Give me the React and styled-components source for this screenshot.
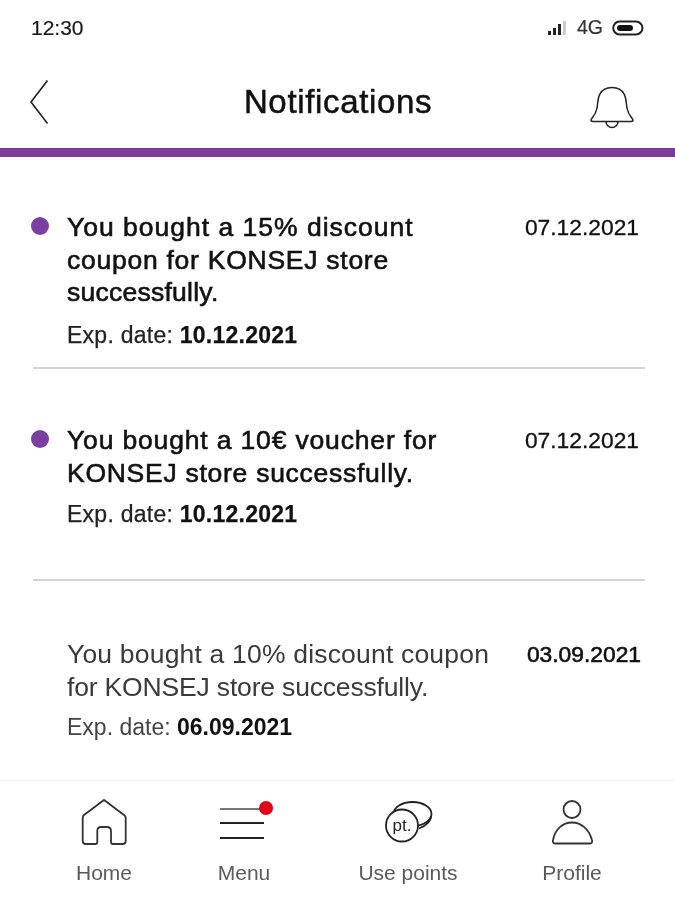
import React from "react";
import styled, { createGlobalStyle } from "styled-components";

const Global = createGlobalStyle`
  html, body { margin: 0; padding: 0; background: #fff; }
  body { font-family: "Liberation Sans", Arial, sans-serif; color: #111; }
`;
const Screen = styled.div`
  width: 675px; height: 900px; display: flex; flex-direction: column; overflow: hidden; background: #fff; filter: blur(0.4px);
`;
const StatusBar = styled.div`
  height: 55px; padding: 0 31px; display: flex; align-items: center; justify-content: space-between; box-sizing: border-box; flex: none;
`;
const Time = styled.span`font-size: 21px; color: #1a1a1a; -webkit-text-stroke: 0.2px #1a1a1a;`;
const StatusIcons = styled.div`display: flex; align-items: center; gap: 9px; font-size: 19.5px; color: #333; -webkit-text-stroke: 0.2px #333;`;
const Header = styled.header`
  height: 93px; flex: none; display: flex; align-items: center; justify-content: space-between; padding: 0 40px 0 29px; box-sizing: border-box;
`;
const BellIcon = styled.svg`margin-top: 12px;`;
const Title = styled.h1`
  margin: 0 0 0 36px; font-size: 33px; font-weight: 400; letter-spacing: 0.65px; color: #111; -webkit-text-stroke: 0.5px #111;
`;
const Bar = styled.div`height: 9px; background: #7a3c96; flex: none;`;
const List = styled.main`flex: 1; padding: 0 30px 0 33px; min-height: 0;`;
const Item = styled.article`
  display: grid; grid-template-columns: 34px 1fr auto; align-items: start; box-sizing: border-box;
  height: ${p => p.$h}px; padding-top: ${p => p.$top}px;
  border-bottom: ${p => (p.$last ? "0" : "2px solid #d4d4d4")};
`;
const Dot = styled.span`width: 18px; height: 18px; border-radius: 50%; background: #7a3fa0; margin: 6px 0 0 -2px;`;
const Body = styled.div`display: flex; flex-direction: column; align-items: flex-start;`;
const Message = styled.p`
  margin: 0; font-size: 26.5px; line-height: 32.5px; white-space: nowrap; color: ${p => (p.$read ? "#3a3a3a" : "#111")};
  ${p => (p.$read ? "" : "-webkit-text-stroke: 0.6px #111;")}
`;
const Line = styled.span`display: block; letter-spacing: ${p => p.$track}px;`;
const Exp = styled.p`
  margin: ${p => p.$gap}px 0 0; font-size: 23px; line-height: 26px; letter-spacing: ${p => (p.$read ? 0 : 0.25)}px;
  color: ${p => (p.$read ? "#444" : "#222")}; ${p => (p.$read ? "" : "-webkit-text-stroke: 0.25px #222;")}
`;
const ExpDate = styled.b`color: #111;`;
const DateText = styled.span`
  font-size: 22.8px; line-height: 32.5px; color: #111; margin-right: ${p => (p.$bold ? 4 : 6)}px; -webkit-text-stroke: ${p => (p.$bold ? "0.6px" : "0.3px")} #111;
`;
const Nav = styled.nav`
  height: 120px; flex: none; border-top: 1px solid #f5f5f5; display: grid; grid-template-columns: 208px 72px 256px 72px; box-sizing: border-box;
`;
const NavItem = styled.div`
  display: flex; flex-direction: column; align-items: center; padding-top: 17px; color: #5a5a5a; font-size: 21px; white-space: nowrap;
`;
const NavIcon = styled.svg`width: 60px; height: 52px; display: block; margin-bottom: 11px; flex: none;`;

const data = [
  { h: 212, top: 54, gap: 13, date: "07.12.2021", exp: "10.12.2021", unread: true,
    lines: [["You bought a 15% discount", 1], ["coupon for KONSEJ store", 0.74], ["successfully.", 0.25]] },
  { h: 212, top: 55, gap: 12, date: "07.12.2021", exp: "10.12.2021", unread: true,
    lines: [["You bought a 10€ voucher for", 0.84], ["KONSEJ store successfully.", 0.73]] },
  { h: 160, top: 57, gap: 11, last: true, date: "03.09.2021", exp: "06.09.2021",
    lines: [["You bought a 10% discount coupon", 0.19], ["for KONSEJ store successfully.", -0.17]] },
];

export default function App() {
  return (
    <Screen>
      <Global />
      <StatusBar>
        <Time>12:30</Time>
        <StatusIcons>
          <svg width="21" height="16" viewBox="0 0 21 16"><g fill="#222"><rect x="1" y="11" width="3" height="4" /><rect x="6" y="8" width="3" height="7" /><rect x="11" y="4" width="3" height="11" /></g><rect x="16" y="1" width="3" height="14" fill="#ccc" /></svg>
          <span>4G</span>
          <svg width="32" height="16" viewBox="0 0 32 16"><path d="M7.500 1.500H24c3.500 0 6.500 3 6.500 6.500s-3 6.500-6.500 6.500H7.500C4 14.500 1.200 11.500 1.200 8S4 1.500 7.500 1.500Z" fill="none" stroke="#222" strokeWidth="2" /><rect x="5" y="5" width="16" height="6" rx="3" fill="#111" /></svg>
        </StatusIcons>
      </StatusBar>
      <Header>
        <svg width="22" height="46" viewBox="0 0 22 46"><path d="M18.500 1.500 2 23l16.500 21.500" fill="none" stroke="#222" strokeWidth="1.600" /></svg>
        <Title>Notifications</Title>
        <BellIcon width="46" height="44" viewBox="0 0 46 44"><path d="M2 34c0-1.500 5-5 6-12 1-5 .5-10 3-14C13 4 18 1.500 23 1.500S33 4 35 8c2.500 4 2 9 3 14 1 7 6 10.500 6 12 0 1-1 1.500-2 1.500H4C3 35.500 2 35 2 34Z" fill="none" stroke="#222" strokeWidth="1.500" /><path d="M17 35.500a6 6 0 0 0 12 0" fill="none" stroke="#222" strokeWidth="1.500" /></BellIcon>
      </Header>
      <Bar />
      <List>
        {data.map((d, i) => (
          <Item key={i} $h={d.h} $top={d.top} $last={d.last}>
            {d.unread ? <Dot /> : <span />}
            <Body>
              <Message $read={!d.unread}>
                {d.lines.map(([text, track]) => <Line key={text} $track={track}>{text}</Line>)}
              </Message>
              <Exp $gap={d.gap} $read={!d.unread}>Exp. date: <ExpDate>{d.exp}</ExpDate></Exp>
            </Body>
            <DateText $bold={!d.unread}>{d.date}</DateText>
          </Item>
        ))}
      </List>
      <Nav>
        <NavItem>
          <NavIcon viewBox="0 0 60 52"><path d="M30 2 10 17Q8.700 18 8.700 20V43Q8.700 46 12 46H21.500Q23.300 46 23.300 44V33Q23.300 29 27 29H33Q37 29 37 33V44Q37 46 39 46H48.500Q51.700 46 51.700 43V20Q51.700 18 50 17Z" fill="none" stroke="#333" strokeWidth="1.800" strokeLinejoin="round" /></NavIcon>
          Home
        </NavItem>
        <NavItem>
          <NavIcon viewBox="0 0 60 52"><path d="M6 11h44" stroke="#777" strokeWidth="2" /><path d="M6 25h44M6 40h44" stroke="#222" strokeWidth="2" /><circle cx="52" cy="10" r="7" fill="#e2001a" /></NavIcon>
          Menu
        </NavItem>
        <NavItem>
          <NavIcon viewBox="0 0 60 52"><ellipse cx="34.500" cy="16" rx="19" ry="12" fill="none" stroke="#222" strokeWidth="1.800" /><path d="M53 18c0 5-5 10-12 12.500" fill="none" stroke="#222" strokeWidth="1.800" /><circle cx="24" cy="27.500" r="16" fill="#fff" stroke="#222" strokeWidth="1.800" /><text x="24" y="33" textAnchor="middle" fontSize="17" fontFamily="Liberation Sans" fill="#222">pt.</text></NavIcon>
          Use points
        </NavItem>
        <NavItem>
          <NavIcon viewBox="0 0 60 52"><circle cx="30" cy="11.500" r="8.500" fill="none" stroke="#333" strokeWidth="1.800" /><path d="M13 45.500c-2 0-2.500-2-2-3.500C13 31 21 24.500 30 24.500S47 31 50 42c.5 1.500 0 3.500-2 3.500Z" fill="none" stroke="#333" strokeWidth="1.800" /></NavIcon>
          Profile
        </NavItem>
      </Nav>
    </Screen>
  );
}
